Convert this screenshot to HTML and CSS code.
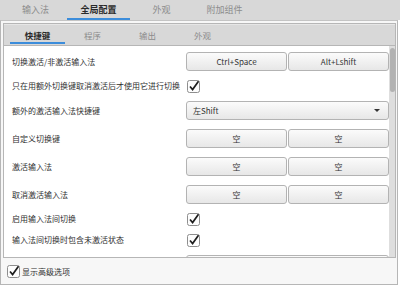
FILE: index.html
```html
<!DOCTYPE html>
<html lang="zh">
<head>
  <meta charset="UTF-8">
  <title>全局配置</title>
  <link rel="stylesheet" href="styles.css">
</head>
<body>
  <div class="win">
    <div class="tabs outer">
      <span class="tab">输入法</span>
      <span class="tab active">全局配置</span>
      <span class="tab">外观</span>
      <span class="tab">附加组件</span>
    </div>

    <div class="pane">
      <div class="inner">
        <div class="tabs sub">
          <span class="tab active">快捷键</span>
          <span class="tab">程序</span>
          <span class="tab">输出</span>
          <span class="tab">外观</span>
        </div>

        <div class="body">
          <div class="list">
            <div class="row">
              <span class="label">切换激活/非激活输入法</span>
              <span class="btn">Ctrl+Space</span>
              <span class="btn">Alt+Lshift</span>
            </div>
            <div class="row chk">
              <span class="label">只在用额外切换键取消激活后才使用它进行切换</span>
              <svg class="box" width="14" height="14" viewBox="0 0 14 14"><rect x="0.5" y="1.5" width="12" height="12" rx="2" fill="#fdfdfd" stroke="#8e8e8e"/><path d="M3 7.5 L5.6 10.6 L11.5 2.2" fill="none" stroke="#1e1e1e" stroke-width="1.7"/></svg>
            </div>
            <div class="row">
              <span class="label">额外的激活输入法快捷键</span>
              <span class="btn combo"><span>左Shift</span><i class="arrow"></i></span>
            </div>
            <div class="row">
              <span class="label">自定义切换键</span>
              <span class="btn">空</span>
              <span class="btn">空</span>
            </div>
            <div class="row">
              <span class="label">激活输入法</span>
              <span class="btn">空</span>
              <span class="btn">空</span>
            </div>
            <div class="row">
              <span class="label">取消激活输入法</span>
              <span class="btn">空</span>
              <span class="btn">空</span>
            </div>
            <div class="row chk">
              <span class="label">启用输入法间切换</span>
              <svg class="box" width="14" height="14" viewBox="0 0 14 14"><rect x="0.5" y="1.5" width="12" height="12" rx="2" fill="#fdfdfd" stroke="#8e8e8e"/><path d="M3 7.5 L5.6 10.6 L11.5 2.2" fill="none" stroke="#1e1e1e" stroke-width="1.7"/></svg>
            </div>
            <div class="row chk">
              <span class="label">输入法间切换时包含未激活状态</span>
              <svg class="box" width="14" height="14" viewBox="0 0 14 14"><rect x="0.5" y="1.5" width="12" height="12" rx="2" fill="#fdfdfd" stroke="#8e8e8e"/><path d="M3 7.5 L5.6 10.6 L11.5 2.2" fill="none" stroke="#1e1e1e" stroke-width="1.7"/></svg>
            </div>
            <!-- next row, scrolled out of view -->
            <div class="row">
              <span class="label"></span>
              <span class="btn combo"></span>
            </div>
          </div>
          <div class="scroll"><div class="thumb"></div></div>
        </div>
      </div>

      <div class="adv">
        <svg class="box" width="14" height="14" viewBox="0 0 14 14"><rect x="0.5" y="1.5" width="12" height="12" rx="2" fill="#fdfdfd" stroke="#8e8e8e"/><path d="M3 7.5 L5.6 10.6 L11.5 2.2" fill="none" stroke="#1e1e1e" stroke-width="1.7"/></svg>
        <span>显示高级选项</span>
      </div>
    </div>
  </div>
</body>
</html>
```

FILE: styles.css
```css
:root {
  --bar-bg: #d8d8d8;
  --pane-bg: #f7f7f7;
  --border: #b6b6b6;
  --text: #303030;
  --muted: #8c8c8c;
  --blue: #3c8ddb;
}

* {
  margin: 0;
  padding: 0;
  box-sizing: border-box;
}

body {
  width: 400px;
  height: 285px;
  overflow: hidden;
  background: #ffffff;
  font-family: "Noto Sans CJK SC", "Noto Sans", sans-serif;
  color: var(--text);
}

.win {
  height: 285px;
  display: flex;
  flex-direction: column;
}

/* Tabs */
.tabs {
  display: flex;
  background: var(--bar-bg);
}

.tabs .tab {
  text-align: center;
  color: var(--muted);
}

.tabs .tab.active {
  color: #2a2a2a;
  font-weight: 700;
  box-shadow: inset 0 -2px var(--blue);
}

.outer {
  height: 20px;
  padding-left: 4px;
}

.outer .tab {
  width: 63px;
  font-size: 9px;
  line-height: 19px;
}

.sub {
  height: 22px;
  padding: 1px 0 1px 6px;
  border-bottom: 1px solid var(--border);
  border-top: 1px solid #e6e6e6;
}

.sub .tab {
  width: 55px;
  font-size: 8.5px;
  line-height: 19px;
}

/* Panes */
.pane {
  width: 398px;
  flex: 1;
  background: var(--pane-bg);
  border: 1px solid var(--border);
  border-top-color: #c4c4c4;
  padding: 2px 1px 0 2px;
  display: flex;
  flex-direction: column;
}

.inner {
  height: 235px;
  border: 1px solid var(--border);
  display: flex;
  flex-direction: column;
}

.body {
  flex: 1;
  display: flex;
  background: #ffffff;
  overflow: hidden;
}

.list {
  width: 385px;
  padding: 1px 1px 0 8px;
}

.row {
  display: grid;
  grid-template-columns: 173px 101px 101px;
  column-gap: 1px;
  align-items: center;
  height: 28px;
  font-size: 8px;
}

.row.chk {
  height: 21px;
}

.label {
  white-space: nowrap;
}

.btn {
  height: 19px;
  line-height: 17px;
  text-align: center;
  border: 1px solid #b3b3b3;
  border-radius: 3px;
  background: linear-gradient(#fbfbfb, #e7e7e7);
  color: #333;
}

.combo {
  grid-column: span 2;
  display: flex;
  justify-content: space-between;
  align-items: center;
  padding: 0 8px 0 6px;
}

.arrow {
  width: 0;
  height: 0;
  border-left: 3px solid transparent;
  border-right: 3px solid transparent;
  border-top: 3px solid #333;
}

.box {
  display: block;
  margin-left: 1px;
}

/* Scrollbar */
.scroll {
  width: 6px;
  background: #dedede;
  padding: 2px 0.5px;
}

.thumb {
  height: 44px;
  border-radius: 3px;
  background: #b2b2b2;
}

/* Bottom option */
.adv {
  flex: 1;
  display: flex;
  align-items: center;
  gap: 1px;
  padding-left: 3px;
  font-size: 8px;
}
```
